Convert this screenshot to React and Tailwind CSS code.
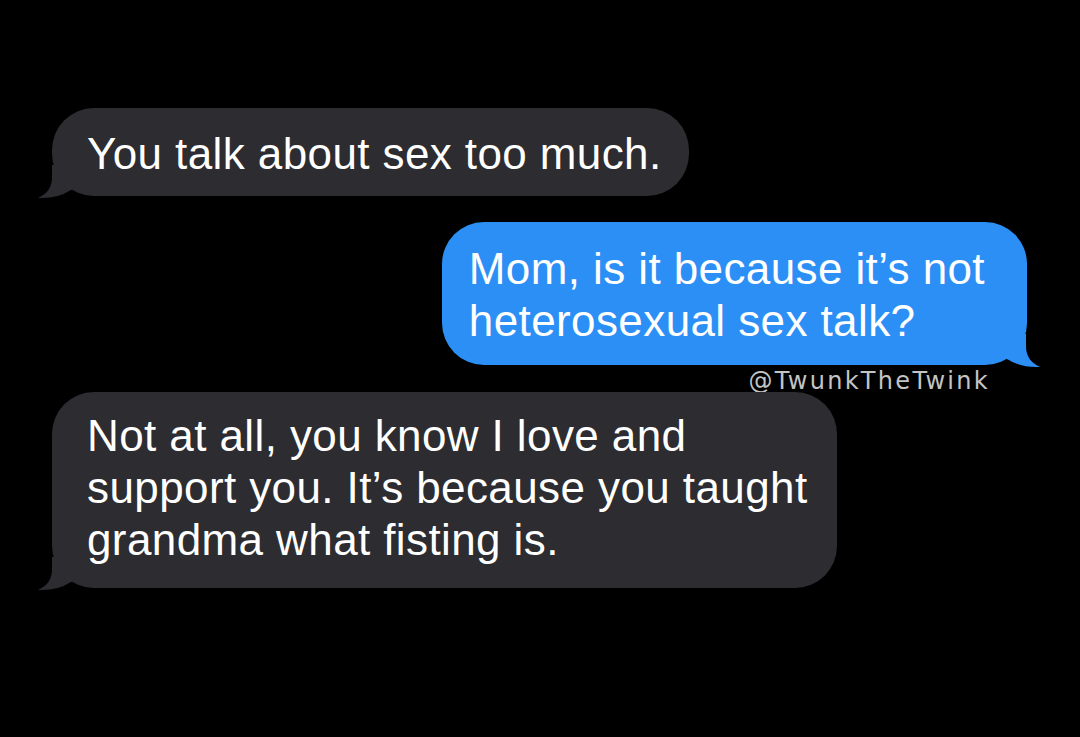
import React from 'react';

function Tail({ side, color }) {
  // little curled tail under the bubble corner
  if (side === 'left') {
    return (
      <svg className="absolute left-[-14px] bottom-[-3px]" width="50" height="34" viewBox="0 0 50 34">
        <path d="M14 0 L14 12 Q14 27 0 33 Q19 34 33 25 L50 25 L50 0 Z" fill={color} />
      </svg>
    );
  }
  return (
    <svg className="absolute right-[-13px] bottom-[-3px]" width="50" height="34" viewBox="0 0 50 34">
      <path d="M36 0 L36 12 Q36 27 50 33 Q31 34 17 25 L0 25 L0 0 Z" fill={color} />
    </svg>
  );
}

function Bubble({ side, children, className }) {
  const color = side === 'left' ? '#2c2c31' : '#2b8ff6';
  return (
    <div
      className={`relative w-fit rounded-[42px] text-white text-[44px] leading-[52px] tracking-[0.4px] ${
        side === 'left' ? 'bg-[#2c2c31] self-start' : 'bg-[#2b8ff6] self-end'
      } ${className}`}
    >
      <Tail side={side} color={color} />
      <div className="relative">{children}</div>
    </div>
  );
}

export default function App() {
  return (
    <div
      className="w-full h-[737px] bg-black overflow-hidden flex flex-col"
      style={{ fontFamily: '"Liberation Sans", Arial, sans-serif' }}
    >
      <Bubble side="left" className="mt-[108px] ml-[52px] pl-[35px] pr-[27px] pt-[20px] pb-[16px]">
        You talk about sex too much.
      </Bubble>

      <Bubble side="right" className="mt-[26px] mr-[53px] pl-[27px] pr-[42px] pt-[21px] pb-[18px]">
        Mom, is it because it’s not
        <br />
        heterosexual sex talk?
      </Bubble>

      <div
        className="self-end mr-[90px] mt-[5px] text-[24px] leading-[22px] text-[#c4c4c4] tracking-[2.3px]"
        style={{ fontFamily: '"DejaVu Sans", "Open Sans", sans-serif' }}
      >
        @TwunkTheTwink
      </div>

      <Bubble side="left" className="mt-[0px] ml-[52px] pl-[35px] pr-[29px] pt-[18px] pb-[22px]">
        Not at all, you know I love and
        <br />
        support you. It’s because you taught
        <br />
        grandma what fisting is.
      </Bubble>
    </div>
  );
}
